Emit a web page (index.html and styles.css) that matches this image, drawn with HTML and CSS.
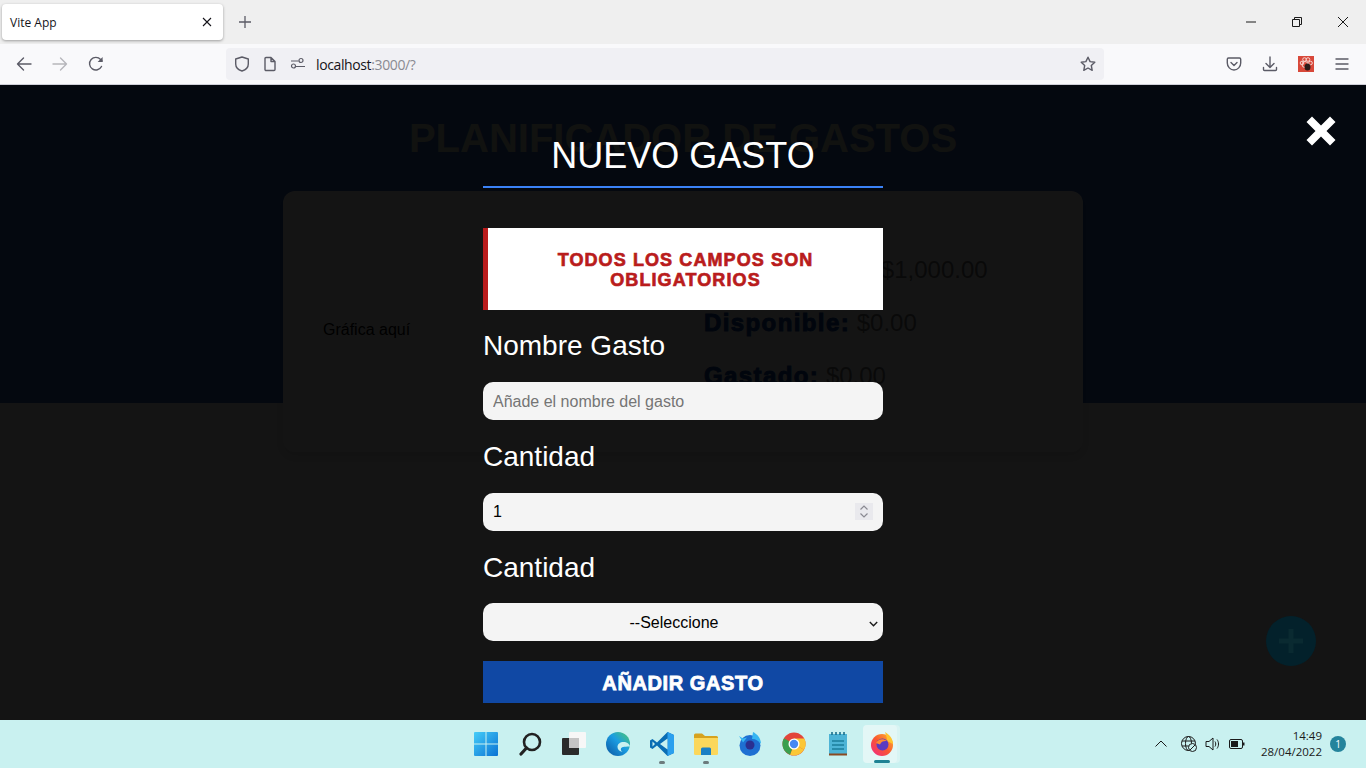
FILE: index.html
```html
<!DOCTYPE html>
<html lang="es">
<head>
<meta charset="utf-8">
<title>Vite App</title>
<link rel="stylesheet" href="styles.css">
</head>
<body>
<header class="browser">
  <div class="tabbar">
    <div class="tab">
      <span class="tab-title">Vite App</span>
      <svg class="ic12" viewBox="0 0 12 12"><path d="M2 2l8 8M10 2l-8 8" class="st-dark"/></svg>
    </div>
    <svg class="newtab" viewBox="0 0 16 16"><path d="M8 2v12M2 8h12" class="st-gray"/></svg>
    <div class="winctl">
      <svg class="ic12" viewBox="0 0 12 12"><path d="M1 6h10" class="st-black"/></svg>
      <svg class="ic12" viewBox="0 0 12 12"><path d="M1.500 3.500h7v7h-7zM3.500 3.500v-2h7v7h-2" class="st-black"/></svg>
      <svg class="ic12" viewBox="0 0 12 12"><path d="M1 1l10 10M11 1L1 11" class="st-black"/></svg>
    </div>
  </div>
  <div class="toolbar">
    <div class="nav">
      <svg class="ic16" viewBox="0 0 16 16"><path d="M15 8H1.500M7.500 2l-6 6 6 6" class="st-tool"/></svg>
      <svg class="ic16" viewBox="0 0 16 16"><path d="M1 8h13.500M8.500 2l6 6-6 6" class="st-off"/></svg>
      <svg class="ic16" viewBox="0 0 16 16"><path d="M13.500 10.500A6.300 6.300 0 1 1 12.600 3.500L14 5" class="st-tool"/><path d="M14.600 1v5h-5z" class="fill-tool"/></svg>
    </div>
    <div class="urlbar">
      <svg class="ic16" viewBox="0 0 16 16"><path d="M8 1l6.300 2v5c0 3.500-3 6-6.300 7-3.300-1-6.300-3.500-6.300-7V3z" class="st-tool"/></svg>
      <svg class="ic16" viewBox="0 0 16 16"><path d="M3 2.500c0-.5.5-1 1-1h5l4 4v8c0 .5-.5 1-1 1H4c-.5 0-1-.5-1-1z M9 1.500v4h4" class="st-tool"/></svg>
      <svg class="ic16" viewBox="0 0 16 16"><circle cx="11" cy="4.500" r="2" class="st-thin"/><circle cx="3.500" cy="10" r="2" class="st-thin"/><path d="M1 5h7.500M6 10.500h9" class="st-thin"/></svg>
      <div class="url">localhost<span class="url-rest">:3000/?</span></div>
      <svg class="ic16 star" viewBox="0 0 16 16"><path d="M8 1.200l2.100 4.400 4.700.6-3.500 3.300.9 4.800L8 12l-4.200 2.300.9-4.800L1.200 6.200l4.700-.6z" class="st-tool"/></svg>
    </div>
    <div class="tools">
      <svg class="ic16" viewBox="0 0 16 16"><path d="M2.500 2h11c.6 0 1.200.5 1.200 1.200V7c0 3.700-3 7-6.700 7S1.300 10.700 1.300 7V3.200C1.300 2.500 1.900 2 2.500 2z" class="st-tool"/><path d="M5 6.500l3 3 3-3" class="st-tool"/></svg>
      <svg class="ic16" viewBox="0 0 16 16"><path d="M8 1v10M4 7.500l4 4 4-4M1.500 11.500v2c0 .6.400 1 1 1h11c.6 0 1-.4 1-1v-2" class="st-tool"/></svg>
      <svg class="ic16" viewBox="0 0 16 16"><rect width="16" height="16" class="ext-bg"/><circle cx="4" cy="7" r="1.800" class="ext-paw"/><circle cx="6.500" cy="3.500" r="1.800" class="ext-paw"/><circle cx="10" cy="3.500" r="1.800" class="ext-paw"/><circle cx="12.500" cy="7" r="1.800" class="ext-paw"/><circle cx="7" cy="8.500" r="3" class="ext-paw"/><ellipse cx="9.500" cy="11" rx="3" ry="3.600" class="ext-bee"/></svg>
      <svg class="ic16" viewBox="0 0 16 16"><path d="M2 3h12M2 8h12M2 13h12" class="st-tool"/></svg>
    </div>
  </div>
</header>

<main class="viewport">
  <div class="hero">
    <h1 class="title">PLANIFICADOR DE GASTOS</h1>
  </div>
  <section class="card">
    <div class="chart">Gráfica aquí</div>
    <div class="budget">
      <p class="row"><span class="key">Presupuesto:</span> $1,000.00</p>
      <p class="row"><span class="key">Disponible:</span> $0.00</p>
      <p class="row"><span class="key">Gastado:</span> $0.00</p>
    </div>
  </section>

  <div class="overlay">
    <form class="form">
      <h2 class="legend">NUEVO GASTO</h2>
      <div class="alert">TODOS LOS CAMPOS SON OBLIGATORIOS</div>
      <div class="field">
        <label class="label" for="nombre">Nombre Gasto</label>
        <input class="control control-text" id="nombre" type="text" placeholder="Añade el nombre del gasto">
      </div>
      <div class="field">
        <label class="label" for="cantidad">Cantidad</label>
        <div class="control-wrap">
          <input class="control number" id="cantidad" type="number" value="1">
          <span class="spinner">
            <svg class="spin-ic" viewBox="0 0 18 17"><path d="M5.500 6.500L9 3l3.500 3.500M5.500 10.500L9 14l3.500-3.500" class="st-spin"/></svg>
          </span>
        </div>
      </div>
      <div class="field">
        <label class="label" for="categoria">Cantidad</label>
        <div class="control-wrap">
          <select class="control select" id="categoria"><option>--Seleccione</option></select>
          <svg class="select-arrow" viewBox="0 0 9 6"><path d="M.8 1l3.700 3.700L8.200 1" class="st-arrow"/></svg>
        </div>
      </div>
      <button class="submit" type="button">AÑADIR GASTO</button>
    </form>
  </div>
  <svg class="close" viewBox="0 0 32 32"><path d="M7 1.500L16 10.500 25 1.500 30.500 7 21.500 16 30.500 25 25 30.500 16 21.500 7 30.500 1.500 25 10.500 16 1.500 7z" class="fill-white"/></svg>
  <svg class="fab" viewBox="0 0 50 50"><circle cx="25" cy="25" r="25" class="fab-bg"/><path d="M25 13v24M13 25h24" class="fab-plus"/></svg>
</main>

<footer class="taskbar">
  <div class="side"></div>
  <div class="apps">
    <div class="app"><svg class="ic24" viewBox="0 0 24 24"><defs><linearGradient id="w" x1="0" y1="0" x2="1" y2="1"><stop offset="0" stop-color="#45cdf8"/><stop offset="1" stop-color="#0a72d4"/></linearGradient></defs><path d="M0 1a1 1 0 0 1 1-1h10.500v11.500H0zM12.500 0H23a1 1 0 0 1 1 1v10.500H12.500zM0 12.500h11.500V24H1a1 1 0 0 1-1-1zM12.500 12.500H24V23a1 1 0 0 1-1 1H12.500z" fill="url(#w)"/></svg></div>
    <div class="app"><svg class="ic24" viewBox="0 0 24 24"><circle cx="14" cy="10" r="8" class="st-search"/><path d="M8.500 16L3 22" class="st-search-h"/></svg></div>
    <div class="app"><svg class="ic24" viewBox="0 0 24 24"><rect x="7" y="0" width="17" height="16" rx="1" class="tv-back"/><rect x="0" y="6" width="17" height="17" rx="1" class="tv-front"/><rect x="7" y="6" width="10" height="10" class="tv-mid"/></svg></div>
    <div class="app"><svg class="ic24" viewBox="0 0 24 24"><defs><linearGradient id="e" x1="0" y1="1" x2="1" y2="0"><stop offset="0" stop-color="#0a55a0"/><stop offset=".55" stop-color="#1b9de2"/><stop offset="1" stop-color="#4fc96b"/></linearGradient></defs><circle cx="12" cy="12" r="12" fill="url(#e)"/><path d="M24 14.500c-.5-2.500-3-4.500-6.500-4.500-3.500 0-6 2-6 5 0 2.500 2 4.500 5 5-1.500-1-2-2.500-1.500-3.500.5-1.200 2-2 9-2z" class="edge-cut"/></svg></div>
    <div class="app"><svg class="ic24" viewBox="0 0 24 24"><path d="M17.500 0L24 3v18l-6.500 3L7 13.500 2.500 17 0 15.500V8.500L2.500 7 7 10.500z" class="vs-a"/><path d="M17.500 0L24 3v18l-6.500 3z" class="vs-b"/><path d="M17.500 6.500L10 12l7.500 5.500z" class="vs-c"/><path d="M2.500 9.500L5 12l-2.500 2.500z" class="vs-c"/></svg><i class="dot"></i></div>
    <div class="app"><svg class="ic24" viewBox="0 0 24 24"><path d="M0 3a1.500 1.500 0 0 1 1.500-1.500H8L11 4H22.500A1.500 1.500 0 0 1 24 5.500V8H0z" class="fo-a"/><path d="M0 6h24v15.500a1.500 1.500 0 0 1-1.500 1.500h-21A1.500 1.500 0 0 1 0 21.500z" class="fo-b"/><path d="M7 17a1.500 1.500 0 0 1 1.500-1.500h7A1.500 1.500 0 0 1 17 17v6H7z" class="fo-c"/></svg><i class="dot"></i></div>
    <div class="app"><svg class="ic24" viewBox="0 0 24 24"><circle cx="12" cy="13.500" r="10.500" class="tb-a"/><path d="M15 0c4 2 8 6 8 12-2-3-5-5-9-5z" class="tb-b"/><path d="M1 4l4 2.500 4-1-4 5z" class="tb-b"/><circle cx="12" cy="13" r="4.500" class="tb-c"/></svg></div>
    <div class="app"><svg class="ic24" viewBox="0 0 24 24"><circle cx="12" cy="12" r="11.500" class="ch-r"/><path d="M12 12L22 17.800A11.500 11.500 0 0 1 8 22.800z" class="ch-y"/><path d="M12 12L8 22.800A11.500 11.500 0 0 1 2 6.200z" class="ch-g"/><path d="M12 6.500h10.300a11.500 11.500 0 0 1-.3 11.300L12 12z" class="ch-y"/><circle cx="12" cy="12" r="5.500" class="ch-w"/><circle cx="12" cy="12" r="4.200" class="ch-b"/></svg></div>
    <div class="app"><svg class="ic24" viewBox="0 0 20 24"><rect x="1" y="2" width="18" height="20" class="np-a"/><rect x="1" y="21.500" width="18" height="2" class="np-b"/><path d="M4 0v3M8 0v3M12 0v3M16 0v3" class="np-c"/><path d="M4 9h12M4 13h12M4 17h12" class="np-d"/></svg></div>
    <div class="app active"><svg class="ic24" viewBox="0 0 24 24"><defs><linearGradient id="f" x1="0" y1="1" x2="1" y2="0"><stop offset="0" stop-color="#f0268a"/><stop offset=".5" stop-color="#f9582f"/><stop offset="1" stop-color="#ffbd30"/></linearGradient></defs><circle cx="12" cy="13" r="11" fill="url(#f)"/><path d="M15 0c5 3 8 7 8 12l-6-3c0-3-1-6-2-9z" class="ff-y"/><circle cx="12.500" cy="12.500" r="6" class="ff-p"/><path d="M6 11c2-4 7-5 11-2-3-.5-6 .5-7 3.500z" class="ff-o"/></svg><i class="bar"></i></div>
  </div>
  <div class="tray">
    <svg class="ic12 chev" viewBox="0 0 12 12"><path d="M.5 8.500L6 3l5.500 5.500" class="st-black"/></svg>
    <svg class="ic16" viewBox="0 0 16 16"><circle cx="7.500" cy="7.500" r="7" class="st-black"/><ellipse cx="7.500" cy="7.500" rx="3" ry="7" class="st-black"/><path d="M1 5h13M1 10h13" class="st-black"/><circle cx="11.500" cy="11.500" r="4" class="st-globe"/><path d="M9 14l5-5" class="st-black"/></svg>
    <svg class="ic16" viewBox="0 0 16 16"><path d="M1 5.500h3L8 2v12L4 10.500H1zM10 5.500c1 1.500 1 3.500 0 5M12 3.500c2 2.500 2 6.500 0 9" class="st-black"/></svg>
    <svg class="ic16" viewBox="0 0 16 16"><rect x=".5" y="3.500" width="13" height="9" rx="1.500" class="st-black"/><rect x="2" y="5" width="7" height="6" class="fill-black"/><rect x="14" y="6.500" width="1.500" height="3" class="fill-black"/></svg>
    <div class="clock"><span>14:49</span><span>28/04/2022</span></div>
    <div class="badge">1</div>
  </div>
</footer>
</body>
</html>
```
FILE: styles.css
```css
* { box-sizing: border-box; }
html, body { margin: 0; height: 100%; }
body {
  display: flex;
  flex-direction: column;
  height: 768px;
  overflow: hidden;
  font-family: "Liberation Sans", Arial, sans-serif;
  background: #f5f5f5;
}
svg { display: block; flex: none; }
.ic12 { width: 12px; height: 12px; }
.ic16 { width: 16px; height: 16px; }
.ic24 { width: 24px; height: 24px; }

.st-dark, .st-gray, .st-black, .st-tool, .st-off, .st-thin, .st-spin { fill: none; stroke-width: 1.1; }
.st-dark { stroke: #15141a; }
.st-gray { stroke: #5b5b66; stroke-width: 1.3; }
.st-black { stroke: #1a1a1a; stroke-width: 1; }
.st-tool { stroke: #5b5b66; stroke-width: 1.4; stroke-linejoin: round; stroke-linecap: round; }
.st-off { stroke: #b6b6bb; stroke-width: 1.4; stroke-linejoin: round; stroke-linecap: round; }
.st-thin { stroke: #5b5b66; stroke-width: 1.2; }
.fill-tool { fill: #5b5b66; }
.fill-black { fill: #1a1a1a; }
.fill-white { fill: #fff; }

.browser { flex: none; height: 85px; display: flex; flex-direction: column; }
.tabbar {
  height: 44px;
  background: #efefef;
  display: flex;
  align-items: center;
  padding: 0 0 0 2px;
}
.tab {
  width: 221px;
  height: 36px;
  background: #fff;
  border-radius: 4px;
  box-shadow: 0 1px 3px rgba(0, 0, 0, .35);
  display: flex;
  align-items: center;
  justify-content: space-between;
  padding: 0 10px 0 8px;
}
.tab-title { font: 12px "Open Sans", sans-serif; color: #15141a; }
.newtab { width: 16px; height: 16px; margin-left: 14px; }
.winctl { margin-left: auto; display: flex; align-items: center; gap: 34px; padding-right: 17px; }

.toolbar {
  flex: 1;
  background: #f9f9fb;
  border-bottom: 1px solid #cfcfd8;
  display: flex;
  align-items: center;
  padding: 0 16px;
}
.nav { display: flex; gap: 20px; }
.urlbar {
  margin-left: 122px;
  width: 878px;
  height: 32px;
  border-radius: 4px;
  background: #f0f0f4;
  display: flex;
  align-items: center;
  padding: 0 8px;
  gap: 12px;
}
.url { margin-left: -2px; font: 14px "Open Sans", sans-serif; letter-spacing: -.38px; color: #15141a; flex: 1; }
.url-rest { color: #8a8a92; }
.tools { margin-left: 122px; display: flex; gap: 20px; }
.ext-bg { fill: #d8483a; }
.ext-paw { fill: none; stroke: #f7d5d0; stroke-width: 1; }
.ext-bee { fill: #2a1a18; }

.viewport { flex: 1; position: relative; overflow: hidden; background: #f5f5f5; }
.hero { height: 318px; background: #3264bb; padding-top: 30px; }
.title { margin: 0; text-align: center; font-size: 40px; line-height: 46px; font-weight: 700; color: #d8dcc8; }
.card {
  width: 800px;
  height: 261px;
  margin: -212px auto 0;
  position: relative;
  background: #fff;
  border-radius: 12px;
  box-shadow: 0 4px 8px rgba(0, 0, 0, .1);
  padding: 40px;
  display: grid;
  grid-template-columns: 1fr 1fr;
  gap: 40px;
}
.chart { font-size: 16px; padding-top: 90px; color: #000; }
.budget { padding: 25px 0 0 1px; display: flex; flex-direction: column; gap: 25px; }
.row { margin: 0; font-size: 24px; line-height: 28px; color: #777; }
.key { font-weight: 700; color: #1048a4; -webkit-text-stroke: 1px #1048a4; letter-spacing: 1.4px; }

.overlay { position: absolute; inset: 0; background: rgba(0, 0, 0, .92); padding-top: 50px; }
.form { width: 400px; margin: 0 auto; display: flex; flex-direction: column; }
.legend {
  margin: 0 0 40px;
  padding-bottom: 10px;
  border-bottom: 2px solid #3b82f6;
  font-size: 36px;
  line-height: 41px;
  font-weight: 400;
  text-align: center;
  color: #fff;
}
.alert {
  height: 81.5px;
  padding: 22px 20px 0;
  background: #fff;
  border-left: 5px solid #b91c1c;
  color: #b91c1c;
  text-align: center;
  font-size: 18px;
  line-height: 20px;
  font-weight: 700;
  letter-spacing: 1.1px;
  -webkit-text-stroke: .7px #b91c1c;
}
.field { margin-top: 20px; display: flex; flex-direction: column; gap: 19.5px; }
.label { font-size: 28px; line-height: 33px; color: #fff; }
.alert + .field { gap: 20.5px; }
.alert + .field .label { line-height: 32px; }
.control {
  display: block;
  width: 100%;
  height: 38px;
  border: 0;
  border-radius: 10px;
  background: #f4f4f4;
  padding: 0 10px;
  font: 16px "Liberation Sans", Arial, sans-serif;
  color: #000;
}
.control-text { padding-top: 2px; }
.control::placeholder { color: #757575; }
.control-wrap { position: relative; height: 38px; }
.number { appearance: textfield; }
.number::-webkit-inner-spin-button, .number::-webkit-outer-spin-button { -webkit-appearance: none; margin: 0; }
.spinner { position: absolute; right: 10px; top: 10px; width: 18px; height: 17px; background: #e9e9ed; }
.spin-ic { width: 18px; height: 17px; }
.st-spin { stroke: #8a8a92; stroke-width: 1.2; }
.select { appearance: none; text-align: center; padding: 0 28px 0 10px; }
.select-arrow { position: absolute; right: 5px; top: 18px; width: 9px; height: 6px; pointer-events: none; }
.st-arrow { fill: none; stroke: #1a1a1a; stroke-width: 1.4; }
.submit {
  margin-top: 20px;
  height: 42px;
  padding-top: 3px;
  border: 0;
  background: #1048a4;
  color: #fff;
  font: 700 20px "Liberation Sans", Arial, sans-serif;
  letter-spacing: .6px;
  -webkit-text-stroke: .8px #fff;
}
.close { position: absolute; right: 29px; top: 30px; width: 32px; height: 32px; }
.fab { position: absolute; right: 50px; top: 531px; width: 50px; height: 50px; }
.fab-bg { fill: #03212b; }
.fab-plus { stroke: #0a2a31; stroke-width: 5; fill: none; }

.taskbar {
  flex: none;
  height: 48px;
  background: #c9f1f0;
  display: grid;
  grid-template-columns: 1fr auto 1fr;
  align-items: center;
}
.apps { display: flex; margin-left: 1px; }
.app { position: relative; width: 44px; height: 48px; display: flex; align-items: center; justify-content: center; }
.dot { position: absolute; left: 19px; bottom: 4px; width: 6px; height: 3px; border-radius: 2px; background: #6c7b7d; }
.active::before {
  content: "";
  position: absolute;
  left: 3px; top: 5px;
  width: 34px; height: 38px;
  border-radius: 4px;
  background: #e3f7f6;
  box-shadow: 3px 0 0 #d8f4f3;
}
.active .ic24 { position: relative; }
.bar { position: absolute; left: 14px; bottom: 5px; width: 16px; height: 3px; border-radius: 2px; background: #1d8294; }
.st-search { fill: none; stroke: #222; stroke-width: 2.6; }
.st-search-h { fill: none; stroke: #222; stroke-width: 3.2; stroke-linecap: round; }
.tv-back { fill: #f7f7f7; }
.tv-front { fill: #2b2b2b; }
.tv-mid { fill: #c4c4c4; }
.edge-cut { fill: #c9f1f0; }
.vs-a { fill: #0a6db4; }
.vs-b { fill: #2ba0ee; }
.vs-c { fill: #c9f1f0; }
.fo-a { fill: #d6a21f; }
.fo-b { fill: #fbd75b; }
.fo-c { fill: #1a7fc4; }
.tb-a { fill: #1e6fd2; }
.tb-b { fill: #35b5f2; }
.tb-c { fill: #2a2f90; }
.ch-r { fill: #e2453a; }
.ch-y { fill: #fbc736; }
.ch-g { fill: #39a04f; }
.ch-w { fill: #fff; }
.ch-b { fill: #4587f3; }
.np-a { fill: #4db4d6; }
.np-b { fill: #8a4a22; }
.np-c { stroke: #1b6f8c; stroke-width: 1.6; fill: none; }
.np-d { stroke: #1b7d9c; stroke-width: 1.6; fill: none; }
.ff-y { fill: #ffc42f; }
.ff-p { fill: #5b3bc0; }
.ff-o { fill: #ff8a30; }
.tray { display: flex; align-items: center; justify-content: flex-end; padding-right: 20px; gap: 8px; color: #1a1a1a; }
.chev { margin-right: 6px; }
.st-globe { fill: #c9f1f0; stroke: #1a1a1a; stroke-width: 1; }
.clock { margin-left: 8px; display: flex; flex-direction: column; align-items: flex-end; font: 11.5px/16px "Open Sans", sans-serif; }
.badge {
  width: 16px; height: 16px;
  border-radius: 50%;
  background: #24849c;
  color: #fff;
  font: 10px/16px "Open Sans", sans-serif;
  text-align: center;
}
```
